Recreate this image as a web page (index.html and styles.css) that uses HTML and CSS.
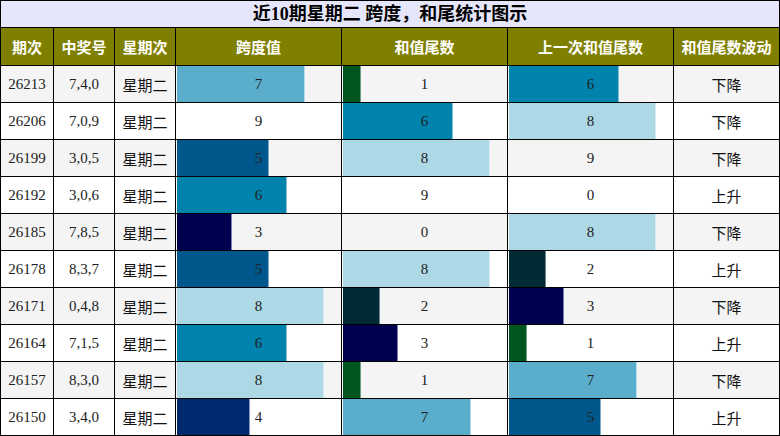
FILE: index.html
```html
<!DOCTYPE html>
<html lang="zh">
<head>
<meta charset="utf-8">
<title>近10期星期二 跨度，和尾统计图示</title>
<link rel="stylesheet" href="styles.css">
</head>
<body>
<div class="table">
  <div class="title">近10期星期二 跨度，和尾统计图示</div>
  <div class="th">期次</div><div class="th">中奖号</div><div class="th">星期次</div><div class="th">跨度值</div><div class="th">和值尾数</div><div class="th">上一次和值尾数</div><div class="th">和值尾数波动</div>

  <div class="td num odd">26213</div><div class="td num odd">7,4,0</div><div class="td cjk odd">星期二</div><div class="td num odd bar b7">7</div><div class="td num odd bar b1">1</div><div class="td num odd bar b6">6</div><div class="td cjk odd">下降</div>
  <div class="td num">26206</div><div class="td num">7,0,9</div><div class="td cjk">星期二</div><div class="td num bar b9">9</div><div class="td num bar b6">6</div><div class="td num bar b8">8</div><div class="td cjk">下降</div>
  <div class="td num odd">26199</div><div class="td num odd">3,0,5</div><div class="td cjk odd">星期二</div><div class="td num odd bar b5">5</div><div class="td num odd bar b8">8</div><div class="td num odd bar b9">9</div><div class="td cjk odd">下降</div>
  <div class="td num">26192</div><div class="td num">3,0,6</div><div class="td cjk">星期二</div><div class="td num bar b6">6</div><div class="td num bar b9">9</div><div class="td num bar b0">0</div><div class="td cjk">上升</div>
  <div class="td num odd">26185</div><div class="td num odd">7,8,5</div><div class="td cjk odd">星期二</div><div class="td num odd bar b3">3</div><div class="td num odd bar b0">0</div><div class="td num odd bar b8">8</div><div class="td cjk odd">下降</div>
  <div class="td num">26178</div><div class="td num">8,3,7</div><div class="td cjk">星期二</div><div class="td num bar b5">5</div><div class="td num bar b8">8</div><div class="td num bar b2">2</div><div class="td cjk">上升</div>
  <div class="td num odd">26171</div><div class="td num odd">0,4,8</div><div class="td cjk odd">星期二</div><div class="td num odd bar b8">8</div><div class="td num odd bar b2">2</div><div class="td num odd bar b3">3</div><div class="td cjk odd">下降</div>
  <div class="td num">26164</div><div class="td num">7,1,5</div><div class="td cjk">星期二</div><div class="td num bar b6">6</div><div class="td num bar b3">3</div><div class="td num bar b1">1</div><div class="td cjk">上升</div>
  <div class="td num odd">26157</div><div class="td num odd">8,3,0</div><div class="td cjk odd">星期二</div><div class="td num odd bar b8">8</div><div class="td num odd bar b1">1</div><div class="td num odd bar b7">7</div><div class="td cjk odd">下降</div>
  <div class="td num">26150</div><div class="td num">3,4,0</div><div class="td cjk">星期二</div><div class="td num bar b4">4</div><div class="td num bar b7">7</div><div class="td num bar b5">5</div><div class="td cjk">上升</div>
</div>
</body>
</html>
```

FILE: styles.css
```css
html, body {
  margin: 0;
  padding: 0;
  background: #fff;
}

.table {
  width: 780px;
  height: 436px;
  box-sizing: border-box;
  display: grid;
  grid-template-columns: 52px 60px 60px 165px 165px 165px 105px;
  grid-template-rows: 26px 37px repeat(10, 36px);
  gap: 1px;
  padding: 1px;
  background: #000;
}

.title {
  grid-column: 1 / -1;
  background: #e6e6fa;
  color: #000;
  font-family: "Liberation Serif", "Noto Sans CJK SC", serif;
  font-weight: bold;
  font-size: 18px;
  display: flex;
  align-items: center;
  justify-content: center;
  line-height: 1;
}

.th {
  background: #808000;
  color: #fff;
  font-family: "Noto Sans CJK SC", sans-serif;
  font-weight: bold;
  font-size: 15px;
  display: flex;
  align-items: center;
  justify-content: center;
  white-space: nowrap;
}

.td {
  background-color: #fff;
  color: #222;
  font-size: 15px;
  display: flex;
  align-items: center;
  justify-content: center;
  white-space: nowrap;
}

.td.odd {
  background-color: #f4f4f4;
}

.num {
  font-family: "Liberation Serif", "Noto Sans CJK SC", serif;
}

.cjk {
  font-family: "Noto Sans CJK SC", sans-serif;
  color: #111;
}

.bar {
  background-image: linear-gradient(90deg,
    rgba(255,255,255,0.25) 0, rgba(255,255,255,0.25) 1px,
    var(--c) 1px, var(--c) var(--w),
    var(--e) var(--w), var(--e) calc(var(--w) + 1px),
    transparent calc(var(--w) + 1px));
  background-repeat: no-repeat;
}

.b0 { --w: 0%; --c: transparent; --e: transparent; background-image: none; }
.b1 { --w: 11.11%; --c: #00561f; --e: #6aa07e; }
.b2 { --w: 22.22%; --c: #002b36; --e: #6f878d; }
.b3 { --w: 33.33%; --c: #000050; --e: #8080b8; }
.b4 { --w: 44.44%; --c: #002a6f; --e: #7f95b8; }
.b5 { --w: 55.56%; --c: #00578c; --e: #7fa9c4; }
.b6 { --w: 66.67%; --c: #0083ad; --e: #80c0d6; }
.b7 { --w: 77.78%; --c: #5aaecb; --e: #b6dcea; }
.b8 { --w: 88.89%; --c: #add8e6; --e: #d6ecf2; }
.b9 { --w: 100%; --c: #ffffff; --e: #ffffff; background-image: none; background-color: #fff; }
```
